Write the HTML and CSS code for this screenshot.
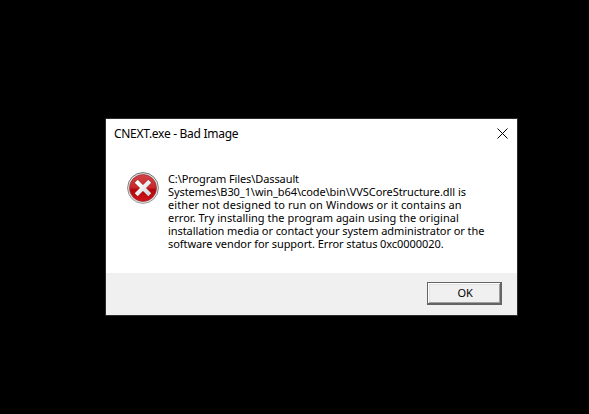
FILE: index.html
```html
<!DOCTYPE html>
<html lang="en">
<head>
<meta charset="utf-8">
<title>CNEXT.exe - Bad Image</title>
<link rel="stylesheet" href="styles.css">
</head>
<body>
<section class="dialog" role="alertdialog">
  <header class="titlebar">
    <h1 class="title">CNEXT.exe - Bad Image</h1>
    <svg class="close" viewBox="0 0 11 11"><path d="M.5.5l10 10M10.5.5l-10 10"/></svg>
  </header>
  <div class="content">
    <svg class="error-icon" viewBox="0 0 32 32">
      <defs>
        <linearGradient id="red" x1="0" y1="0" x2="0" y2="1"><stop offset="0" stop-color="#d04448"/><stop offset=".48" stop-color="#c8282c"/><stop offset=".56" stop-color="#b4060c"/><stop offset="1" stop-color="#d0161c"/></linearGradient>
        <linearGradient id="rim" x1="0" y1="0" x2="0" y2="1"><stop offset="0" stop-color="#6a6c6c"/><stop offset="1" stop-color="#a0a0a0"/></linearGradient>
        <linearGradient id="cross" x1="0" y1="0" x2="1" y2="1"><stop offset="0" stop-color="#fff"/><stop offset="1" stop-color="#d9dede"/></linearGradient>
      </defs>
      <circle cx="16" cy="16" r="15.4" fill="#dfe5e5" stroke="url(#rim)"/>
      <circle cx="16" cy="16" r="13.5" fill="url(#red)" stroke="#9c3034" stroke-width=".7"/>
      <path d="M10.7 10.7l10.6 10.6M21.3 10.7L10.7 21.3" stroke="#801015" stroke-width="5.2" stroke-linecap="square" opacity=".45"/>
      <path d="M10.7 10.7l10.6 10.6M21.3 10.7L10.7 21.3" stroke="url(#cross)" stroke-width="4.2" stroke-linecap="square"/>
    </svg>
    <p class="message">
      <span class="line l1">C:\Program Files\Dassault</span>
      <span class="line l2">Systemes\B30_1\win_b64\code\bin\VVSCoreStructure.dll is</span>
      <span class="line l3">either not designed to run on Windows or it contains an</span>
      <span class="line l4">error. Try installing the program again using the original</span>
      <span class="line l5">installation media or contact your system administrator or the</span>
      <span class="line l6">software vendor for support. Error status 0xc0000020.</span>
    </p>
  </div>
  <footer class="footer"><button class="ok">OK</button></footer>
</section>
</body>
</html>
```
FILE: styles.css
```css
* { box-sizing: border-box; }
body { margin: 0; height: 414px; padding: 119px 72px 99px 106px; background: #000; font-family: "Noto Sans", sans-serif; color: #000; overflow: hidden; }
.dialog { width: 411px; height: 196px; background: #fff; display: flex; flex-direction: column; box-shadow: 0 0 0 1px #2b2b2b; }
.titlebar { height: 29px; display: flex; justify-content: space-between; align-items: center; padding: 0 9px 0 8px; }
.title { margin: 0; font-size: 12px; font-weight: 400; line-height: 16px; letter-spacing: -.29px; white-space: nowrap; }
.close { width: 11px; height: 11px; stroke: #000; fill: none; stroke-width: 1; }
.content { height: 125px; display: flex; align-items: flex-start; padding: 24px 0 0 21px; gap: 9px; }
.error-icon { width: 32px; height: 32px; flex: none; }
.message { margin: 0; font-size: 11px; line-height: 13px; white-space: nowrap; }
.line { display: block; }
.l1 { letter-spacing: -.1px; }
.l2, .l5, .l6 { letter-spacing: -.07px; }
.l3 { letter-spacing: .1px; }
.l4 { letter-spacing: .03px; }
.footer { flex: 1; background: #f0f0f0; display: flex; justify-content: flex-end; padding: 9px 15px 0 0; }
.ok { width: 75px; height: 23px; padding: 0 0 2px 2px; font: 11px/13px "Noto Sans", sans-serif; letter-spacing: -.3px; color: #000; background: #f0f0f0; border: 1px solid #646464; border-right-width: 2px; border-bottom-width: 2px; box-shadow: inset 1px 1px #fff, inset -1px -1px #a0a0a0, inset 2px 2px #e3e3e3; }
```
